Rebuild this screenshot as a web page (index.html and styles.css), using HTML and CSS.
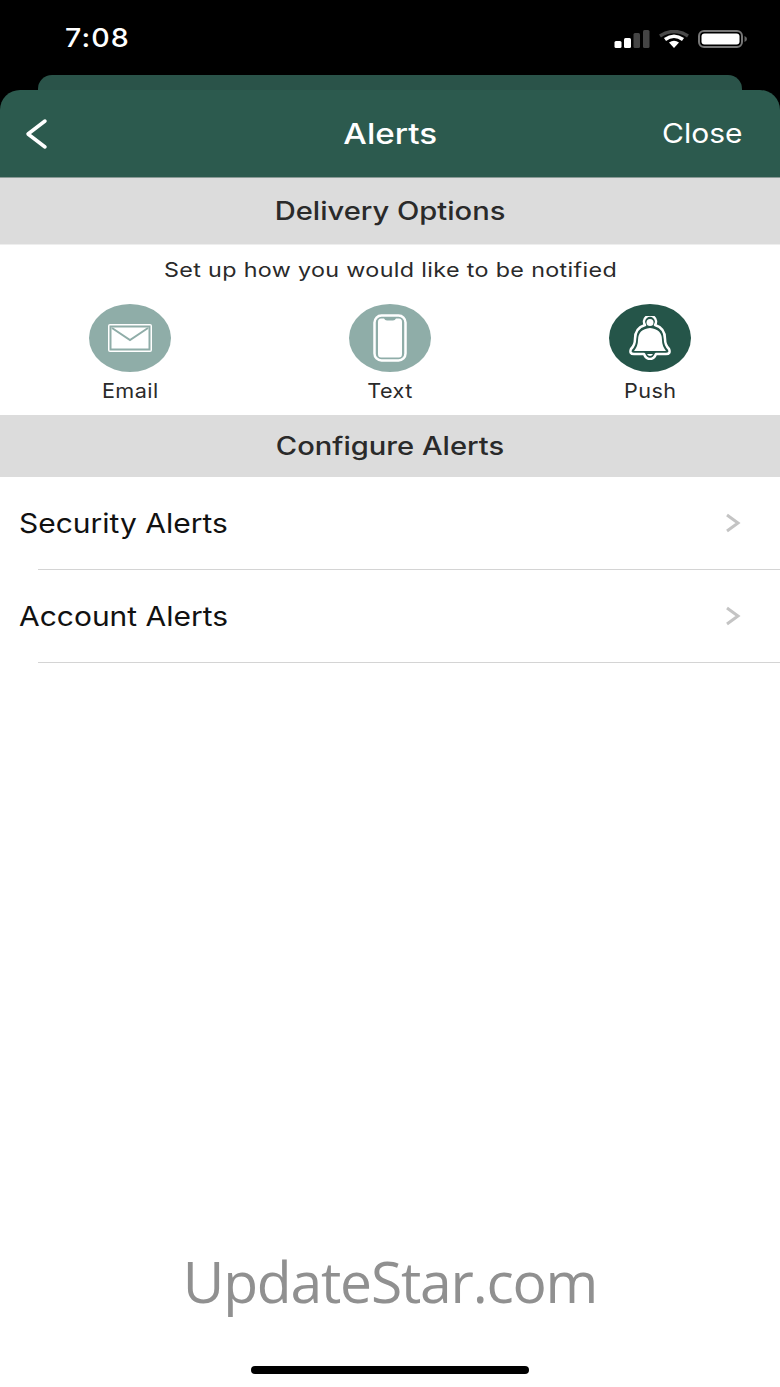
FILE: index.html
```html
<!DOCTYPE html>
<html>
<head>
    <title>Alerts</title>
    <link rel="stylesheet" href="styles.css">
</head>
<body>

<div class="phone">
    <div class="status-bar">
        <span class="clock">7:08</span>
        <div class="status-icons">
            <svg width="36" height="18" viewBox="0 0 36 18">
                <rect x="0.500" y="11" width="7" height="7" rx="1.500" fill="#fff"/>
                <rect x="10" y="8" width="7" height="10" rx="1.500" fill="#fff"/>
                <rect x="19.500" y="3" width="6.500" height="15" rx="1.500" fill="#444"/>
                <rect x="29" y="0" width="6.500" height="18" rx="1.500" fill="#444"/>
            </svg>
            <svg width="30" height="18" viewBox="0 0 30 18">
                <path d="M1 6 Q15 -3 29 6" fill="none" stroke="#4a4a4a" stroke-width="3.500"/>
                <path d="M6 9.500 Q15 3 24 9.500" fill="none" stroke="#fff" stroke-width="3.500"/>
                <path d="M10 12.500 Q15 9 20 12.500 L15 18 Z" fill="#fff"/>
            </svg>
            <svg width="50" height="18" viewBox="0 0 50 18">
                <rect x="1" y="1" width="43" height="16" rx="5" fill="none" stroke="#777" stroke-width="2"/>
                <rect x="3.500" y="3.500" width="38" height="11" rx="3" fill="#fff"/>
                <path d="M46.500 6 Q49 7 49 9 Q49 11 46.500 12 Z" fill="#666"/>
            </svg>
        </div>
    </div>

    <div class="sheet-behind"></div>

    <div class="sheet-header">
        <svg class="back" width="24" height="32" viewBox="0 0 24 32">
            <path d="M21 3 L4 16 L21 29" fill="none" stroke="#fff" stroke-width="3.500" stroke-linecap="round" stroke-linejoin="round"/>
        </svg>
        <h1 class="title"><span class="stretch">Alerts</span></h1>
        <span class="close">Close</span>
    </div>

    <div class="section-head section-delivery"><span class="stretch">Delivery Options</span></div>

    <div class="delivery">
        <p class="hint"><span class="stretch">Set up how you would like to be notified</span></p>
        <div class="options">
            <div class="option">
                <div class="circle">
                    <svg width="46" height="30" viewBox="0 0 46 30">
                        <rect x="1" y="1" width="44" height="28" rx="2" fill="#fff"/>
                        <rect x="3.500" y="3.500" width="39" height="23" fill="none" stroke="#8fada8" stroke-width="2"/>
                        <path d="M5 5 L23 17 L41 5" fill="none" stroke="#8fada8" stroke-width="2"/>
                    </svg>
                </div>
                <span class="option-label">Email</span>
            </div>
            <div class="option">
                <div class="circle">
                    <svg width="34" height="48" viewBox="0 0 34 48">
                        <rect x="1.500" y="1.500" width="31" height="45" rx="7" fill="none" stroke="#fff" stroke-width="2.500"/>
                        <path d="M5 8 Q5 4.500 8 4.500 L11 4.500 Q12 6.500 14 6.500 L20 6.500 Q22 6.500 23 4.500 L26 4.500 Q29 4.500 29 8 L29 40 Q29 43.500 26 43.500 L8 43.500 Q5 43.500 5 40 Z" fill="#fff"/>
                    </svg>
                </div>
                <span class="option-label">Text</span>
            </div>
            <div class="option">
                <div class="circle circle-on">
                    <svg width="42" height="44" viewBox="0 0 42 44">
                        <path d="M16 9 A6 6 0 1 1 26 9 Q36 12 36 23 Q36 29 40 33 Q42 38 37 38 L27 38 Q25 43 21 43 Q17 43 15 38 L5 38 Q0 38 2 33 Q6 29 6 23 Q6 12 16 9 Z" fill="none" stroke="#fff" stroke-width="2.500" stroke-linejoin="round"/>
                        <circle cx="21" cy="6.500" r="3.500" fill="#fff"/>
                        <path d="M21 12 Q33 13 33 24 Q33 30 37 35 L5 35 Q9 30 9 24 Q9 13 21 12 Z" fill="#fff"/>
                        <path d="M18 38 L24 38 Q23 40 21 40 Q19 40 18 38 Z" fill="#fff"/>
                    </svg>
                </div>
                <span class="option-label">Push</span>
            </div>
        </div>
    </div>

    <div class="section-head section-configure"><span class="stretch">Configure Alerts</span></div>

    <div class="row">
        <span class="row-label">Security Alerts</span>
        <svg class="chevron" width="16" height="20" viewBox="0 0 16 20">
            <path d="M2 2 L13 10 L2 18" fill="none" stroke="#c4c4c4" stroke-width="3"/>
        </svg>
    </div>
    <div class="row">
        <span class="row-label">Account Alerts</span>
        <svg class="chevron" width="16" height="20" viewBox="0 0 16 20">
            <path d="M2 2 L13 10 L2 18" fill="none" stroke="#c4c4c4" stroke-width="3"/>
        </svg>
    </div>

    <div class="bottom">
        <div class="watermark">UpdateStar.com</div>
        <div class="home-bar"></div>
    </div>
</div>

</body>
</html>
```

FILE: styles.css
```css
html, body {
    margin: 0;
    padding: 0;
}

body {
    background-color: white;
    font-family: "Inter", "Liberation Sans", sans-serif;
}

.phone {
    width: 780px;
    height: 1387px;
    display: flex;
    flex-direction: column;
    overflow: hidden;
    background: linear-gradient(black 0, black 120px, white 120px);
}

/* the screenshot is stretched sideways, so the text is too */
.stretch {
    display: inline-block;
    transform: scaleX(1.165);
}

.status-bar {
    height: 75px;
    display: flex;
    justify-content: space-between;
    align-items: flex-start;
    padding: 0 32px 0 65px;
    box-sizing: border-box;
    flex: none;
}

.clock {
    margin-top: 22px;
    color: white;
    font-size: 26px;
    font-weight: 500;
    line-height: 32px;
    letter-spacing: 1px;
    transform: scaleX(1.1);
    transform-origin: left center;
}

.status-icons {
    display: flex;
    align-items: center;
    gap: 9px;
    margin-top: 30px;
}

.sheet-behind {
    height: 15px;
    margin: 0 38px;
    background-color: #2a5349;
    border-radius: 14px 14px 0 0;
    flex: none;
}

.sheet-header {
    height: 87px;
    background-color: #2c5a4e;
    border-radius: 20px 20px 0 0;
    border-bottom: 1px solid #8a9a96;
    display: flex;
    align-items: center;
    justify-content: space-between;
    padding: 0 38px 0 24px;
    flex: none;
    position: relative;
}

.title {
    position: absolute;
    left: 0;
    right: 0;
    margin: 0;
    text-align: center;
    color: white;
    font-size: 28.500px;
    font-weight: 500;
    line-height: 87px;
}

.close {
    color: white;
    font-size: 27px;
    font-weight: 400;
    transform: scaleX(1.11);
    transform-origin: right center;
}

.section-head {
    background-color: #dcdcdc;
    display: flex;
    align-items: center;
    justify-content: center;
    color: #2a2a2a;
    font-size: 25px;
    font-weight: 500;
    flex: none;
}

.section-delivery {
    height: 66px;
}

.section-configure {
    height: 62px;
}

.delivery {
    height: 171px;
    box-sizing: border-box;
    border-top: 1px solid #eeeeee;
    padding-top: 13px;
    background-color: white;
    flex: none;
}

.hint {
    margin: 0;
    text-align: center;
    color: #2a2a2a;
    font-size: 20px;
    line-height: 24px;
    letter-spacing: 0.3px;
}

.options {
    display: grid;
    grid-template-columns: repeat(3, 260px);
    margin-top: 22px;
}

.option {
    display: flex;
    flex-direction: column;
    align-items: center;
}

.circle {
    width: 82px;
    height: 68px;
    border-radius: 50%;
    background-color: #8fada8;
    display: flex;
    align-items: center;
    justify-content: center;
}

.circle-on {
    background-color: #255549;
}

.option-label {
    margin-top: 7px;
    color: #2a2a2a;
    font-size: 20px;
    line-height: 24px;
    letter-spacing: 0.4px;
    transform: scaleX(1.08);
}

.row {
    height: 93px;
    box-sizing: border-box;
    flex: none;
    display: flex;
    align-items: center;
    justify-content: space-between;
    margin-left: 38px;
    padding-right: 39px;
    border-bottom: 1px solid #d4d4d4;
}

.row-label {
    margin-left: -19px;
    color: #111111;
    font-size: 27px;
    transform: scaleX(1.11);
    transform-origin: left center;
}

.bottom {
    flex: 1;
    display: flex;
    flex-direction: column;
    align-items: center;
    justify-content: flex-end;
    padding-bottom: 13px;
}

.watermark {
    color: #909090;
    font-family: "Open Sans", "Noto Sans", sans-serif;
    font-size: 57px;
    font-weight: 400;
    letter-spacing: -1.2px;
    line-height: 80px;
    margin-bottom: 45px;
}

.home-bar {
    width: 278px;
    height: 8px;
    border-radius: 4px;
    background-color: black;
}
```
